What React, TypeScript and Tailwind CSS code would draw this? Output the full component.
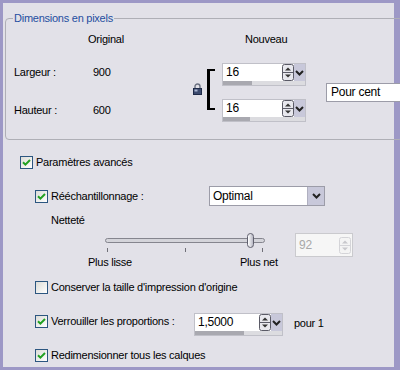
import React from 'react';

// small XP-style checkbox
const Check: React.FC<{ checked?: boolean }> = ({ checked }) => (
  <div className="w-[13px] h-[13px] shrink-0 border border-[#2c5680] bg-linear-to-br from-[#dcdcd7] to-white flex items-center justify-center">
    {checked && (
      <svg width="9" height="9" viewBox="0 0 9 9">
        <path d="M1 4.2 L3.4 6.6 L8 2" stroke="#21a121" strokeWidth="2" fill="none" />
      </svg>
    )}
  </div>
);

const UpDown: React.FC<{ disabled?: boolean }> = ({ disabled }) => {
  const stroke = disabled ? '#d4d4d8' : '#5a5a66';
  const fill = disabled ? '#c8c8cc' : '#333';
  return (
    <svg width="12" height="17" viewBox="0 0 12 17" className="shrink-0">
      <rect x="0.5" y="0.5" width="11" height="16" rx="2" fill={disabled ? '#f4f4f4' : '#e8e8ee'} stroke={stroke} />
      <line x1="1" y1="8.5" x2="11" y2="8.5" stroke={stroke} />
      <path d="M3 6.5 L6 3.5 L9 6.5Z" fill={fill} />
      <path d="M3 10.5 L6 13.5 L9 10.5Z" fill={fill} />
    </svg>
  );
};

const Chevron: React.FC = () => (
  <svg width="9" height="6" viewBox="0 0 9 6">
    <path d="M1 1 L4.5 4.5 L8 1" stroke="#222" strokeWidth="2" fill="none" />
  </svg>
);

const Spin: React.FC<{ value: string; width: number; fill: number }> = ({ value, width, fill }) => (
  <div className="h-[23px] border border-[#c0c0c8] bg-white flex flex-col" style={{ width }}>
    <div className="flex h-[17px]">
      <div className="flex-1 pl-[3px] leading-[17px] text-[12px]">{value}</div>
      <UpDown />
      <div className="w-[11px] bg-[#c8c8da] flex items-center justify-center">
        <Chevron />
      </div>
    </div>
    <div className="h-[5px] flex">
      <div className="bg-[#a9a9b0]" style={{ width: fill }} />
      <div className="flex-1 bg-[#dcdce0]" />
    </div>
  </div>
);

const Lock: React.FC = () => (
  <svg width="9" height="12" viewBox="0 0 9 12" className="shrink-0">
    <path d="M2 5.5 V3.5 A2.5 2.5 0 0 1 7 3.5 V5.5" stroke="#6a7080" strokeWidth="1.4" fill="none" />
    <rect x="0.5" y="5.5" width="8" height="6" fill="#3c4a6e" stroke="#1e2a48" />
    <rect x="1.5" y="6.5" width="3" height="2" fill="#a8b4d0" />
  </svg>
);

export default function App() {
  return (
    <div className="w-[400px] h-[370px] bg-[#9d98c6] pt-[3px] pl-[3px] pr-[6px] pb-[3px] font-['Liberation_Sans',Arial,sans-serif] text-[11px] tracking-[-0.25px] leading-[13px] text-black">
      <div className="h-full bg-[#e2e1e8] flex flex-col">
        {/* Dimensions en pixels */}
        <fieldset className="ml-[2px] mt-[9px] w-[388px] h-[128px] border border-[#afafb6] rounded-[4px]">
          <legend className="ml-[7px] px-[1px] text-[#1f4ea0] leading-[13px]">Dimensions en pixels</legend>
          <div className="flex mt-[8px]">
            <span className="ml-[82px] w-[157px]">Original</span>
            <span>Nouveau</span>
          </div>
          <div className="flex items-start">
            <div className="w-[187px] pt-[20px] pl-[8px] flex flex-col">
              <div className="flex">
                <span className="w-[79px]">Largeur :</span>
                <span>900</span>
              </div>
              <div className="flex mt-[25px]">
                <span className="w-[79px]">Hauteur :</span>
                <span>600</span>
              </div>
            </div>
            <div className="mt-[37px]">
              <Lock />
            </div>
            <div className="ml-[5px] mt-[23px] w-[8px] h-[41px] border-l-[3px] border-y-2 border-black" />
            <div className="ml-[7px] flex flex-col">
              <div className="mt-[17px]">
                <Spin value="16" width={84} fill={29} />
              </div>
              <div className="mt-[13px]">
                <Spin value="16" width={84} fill={27} />
              </div>
            </div>
            <div className="ml-[20px] mt-[37px] w-[76px] h-[19px] border border-[#9c9ca8] bg-white pl-[4px] leading-[17px] text-[12px] shrink-0">
              Pour cent
            </div>
          </div>
        </fieldset>

        {/* Paramètres avancés */}
        <div className="flex items-center gap-[3px] ml-[17px] mt-[16px] h-[13px]">
          <Check checked />
          <span>Paramètres avancés</span>
        </div>

        <div className="flex items-center ml-[32px] mt-[17px] h-[20px]">
          <Check checked />
          <span className="ml-[3px] w-[158px]">Rééchantillonnage :</span>
          <div className="w-[116px] h-[20px] border border-[#9c9ca8] bg-white flex">
            <div className="flex-1 pl-[3px] leading-[18px] text-[12px]">Optimal</div>
            <div className="w-[17px] bg-[#c8c8da] border-l border-[#b0b0c0] flex items-center justify-center">
              <Chevron />
            </div>
          </div>
        </div>

        <div className="ml-[48px] mt-[8px]">Netteté</div>

        {/* slider */}
        <div className="flex items-start mt-[6px]">
          <div className="ml-[102px] w-[160px] flex flex-col relative">
            <div className="mt-[5px] h-[5px] rounded-full border border-[#85858e] bg-[#d4d4da]" />
            <div className="absolute left-[142px] top-0 w-[7px] h-[15px] rounded-full border border-[#60606e] bg-linear-to-r from-white to-[#b8b8c4]" />
            <div className="mt-[5px] h-[4px] flex justify-between px-[2px]">
              <div className="w-px bg-[#707078]" />
              <div className="w-px bg-[#707078]" />
              <div className="w-px bg-[#707078]" />
            </div>
          </div>
          <div className="ml-[30px] w-[58px] h-[24px] border border-[#cacace] bg-[#f6f6f6] flex items-center pr-[1px]">
            <span className="flex-1 pl-[3px] text-[12px] text-[#a8a8a8]">92</span>
            <UpDown disabled />
          </div>
        </div>
        <div className="flex ml-[85px] mt-[-1px]">
          <span className="w-[152px]">Plus lisse</span>
          <span>Plus net</span>
        </div>

        <div className="flex items-center gap-[3px] ml-[32px] mt-[12px] h-[13px]">
          <Check />
          <span>Conserver la taille d'impression d'origine</span>
        </div>

        <div className="flex items-start ml-[32px] mt-[19px]">
          <div className="flex items-center mt-[2px]">
            <Check checked />
            <span className="ml-[3px] w-[143px]">Verrouiller les proportions :</span>
          </div>
          <Spin value="1,5000" width={89} fill={49} />
          <span className="ml-[11px] mt-[4px]">pour 1</span>
        </div>

        <div className="flex items-center gap-[3px] ml-[32px] mt-[13px] h-[13px]">
          <Check checked />
          <span>Redimensionner tous les calques</span>
        </div>
      </div>
    </div>
  );
}
